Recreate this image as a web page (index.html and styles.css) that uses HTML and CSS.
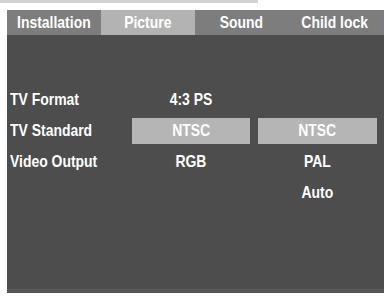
FILE: index.html
```html
<!DOCTYPE html>
<html>
<head>
<meta charset="utf-8">
<link rel="stylesheet" href="styles.css">
</head>
<body>
<div class="topline"></div>
<div class="screen">
  <div class="tabs">
    <div class="tab"><span class="t">Installation</span></div>
    <div class="tab active"><span class="t">Picture</span></div>
    <div class="tab"><span class="t">Sound</span></div>
    <div class="tab"><span class="t">Child lock</span></div>
  </div>
  <div class="panel">
    <div class="grid">
      <div class="label"><span class="t">TV Format</span></div>
      <div class="val"><span class="t">4:3 PS</span></div>
      <div class="val"></div>

      <div class="label"><span class="t">TV Standard</span></div>
      <div class="val sel"><span class="t">NTSC</span></div>
      <div class="val sel"><span class="t">NTSC</span></div>

      <div class="label"><span class="t">Video Output</span></div>
      <div class="val"><span class="t">RGB</span></div>
      <div class="val"><span class="t">PAL</span></div>

      <div class="label"></div>
      <div class="val"></div>
      <div class="val"><span class="t">Auto</span></div>
    </div>
  </div>
</div>
</body>
</html>
```

FILE: styles.css
```css
html, body {
  margin: 0;
  padding: 0;
  background: #ffffff;
}
body {
  font-family: "Liberation Sans", Arial, sans-serif;
  font-weight: bold;
  color: #ffffff;
  width: 387px;
  height: 298px;
  overflow: hidden;
}
.t {
  display: inline-block;
  transform: scaleX(0.82);
  transform-origin: center;
  white-space: nowrap;
}
.topline {
  width: 258px;
  height: 3px;
  background: #d2d2d2;
}
.screen {
  margin: 7px 0 0 7px;
  width: 377px;
}
.tabs {
  display: grid;
  grid-template-columns: 94px 94px 93px 93px;
  height: 25px;
  background: #7d7d7d;
}
.tab {
  display: flex;
  align-items: center;
  justify-content: center;
  font-size: 17px;
  padding-top: 1px;
  background: #7d7d7d;
}
.tab.active {
  background: #b3b3b3;
}
.panel {
  height: 258px;
  background: linear-gradient(to bottom, #4d4d4d 0, #4d4d4d 254px, #5e5e5e 254px, #5e5e5e 255px, #4d4d4d 255px, #4d4d4d 256px, #5e5e5e 256px, #5e5e5e 257px, #4d4d4d 257px);
  box-sizing: border-box;
  padding: 52px 0 0 3px;
}
.grid {
  display: grid;
  grid-template-columns: 114px 118px 119px;
  column-gap: 8px;
  grid-auto-rows: 26px;
  row-gap: 5px;
}
.label {
  display: flex;
  align-items: center;
  font-size: 17px;
}
.label .t {
  transform-origin: left center;
}
.val {
  display: flex;
  align-items: center;
  justify-content: center;
  font-size: 17px;
}
.val.sel {
  background: #b5b5b5;
}
```
